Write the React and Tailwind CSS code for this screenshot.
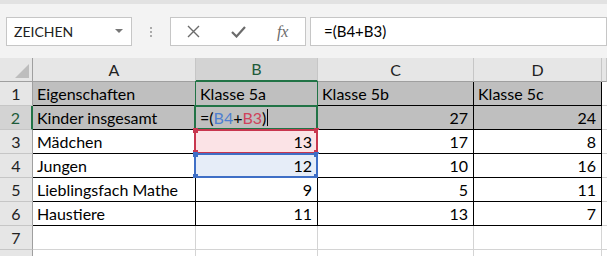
import React from 'react';

const cols = ['A', 'B', 'C', 'D', ''];

const rows = [
  { n: 1, gray: true, cells: ['Eigenschaften', 'Klasse 5a', 'Klasse 5b', 'Klasse 5c'] },
  { n: 2, gray: true, cells: ['Kinder insgesamt', 'formula', '27', '24'] },
  { n: 3, cells: ['Mädchen', '13', '17', '8'], ref: 'red' },
  { n: 4, cells: ['Jungen', '12', '10', '16'], ref: 'blue' },
  { n: 5, cells: ['Lieblingsfach Mathe', '9', '5', '11'] },
  { n: 6, cells: ['Haustiere', '11', '13', '7'] },
  { n: 7, cells: null },
  { n: '', cells: null },
];

const Formula = () => (
  <span className="flex items-center">
    <span>=(</span>
    <span className="text-[#4f7fd0]">B4</span>
    <span>+</span>
    <span className="text-[#d0435b]">B3</span>
    <span>)</span>
    <span className="ml-[1px] w-px h-[17px] bg-black" />
  </span>
);

const Handles = ({ color }) => (
  <>
    <span className={`absolute -left-[3px] -top-[3px] w-[5px] h-[5px] ${color}`} />
    <span className={`absolute -right-[3px] -top-[3px] w-[5px] h-[5px] ${color}`} />
    <span className={`absolute -left-[3px] -bottom-[3px] w-[5px] h-[5px] ${color}`} />
    <span className={`absolute -right-[3px] -bottom-[3px] w-[5px] h-[5px] ${color}`} />
  </>
);

function DataCell({ value, col, row }) {
  const isNum = /^\d+$/.test(value);
  const bg = row.gray ? 'bg-[#bfbfbf]' : row.ref === 'red' && col === 1 ? 'bg-[#fbe3e6]' : row.ref === 'blue' && col === 1 ? 'bg-[#e6edf8]' : 'bg-white';
  return (
    <div className={`relative h-[24px] border-r border-b border-black flex items-center ${bg} ${isNum ? 'justify-end pr-[5px]' : 'pl-[4px]'}`}>
      {value === 'formula' ? <Formula /> : <span className="whitespace-nowrap">{value}</span>}
      {row.n === 1 && col === 1 && (
        <span className="absolute -left-px -top-px right-[-1px] bottom-0 border-x border-[#217346]" />
      )}
      {row.n === 2 && col === 1 && (
        <span className="absolute -left-[2px] -top-[1px] right-[-1px] bottom-[-1px] border-2 border-[#217346]" />
      )}
      {row.ref === 'red' && col === 1 && (
        <span className="absolute -left-[2px] -top-[1px] right-[-1px] bottom-[-1px] border-2 border-[#c8374f]">
          <Handles color="bg-[#c8374f]" />
        </span>
      )}
      {row.ref === 'blue' && col === 1 && (
        <span className="absolute -left-[2px] -top-[1px] right-[-1px] bottom-[-1px] border-2 border-[#3f6fc6]">
          <Handles color="bg-[#3f6fc6]" />
        </span>
      )}
    </div>
  );
}

export default function App() {
  return (
    <div className="w-[607px] h-[256px] overflow-hidden bg-[#f3f3f3] text-[16px] text-black font-['Lato','Liberation_Sans',sans-serif]">
      <div className="h-[4px] bg-[#e2e2e2]" />

      {/* formula bar */}
      <div className="flex items-center h-[29px] mt-[13px] pl-[6px]">
        <div className="w-[126px] h-full bg-white border border-[#c6c6c6] flex items-center justify-between pl-[7px] pr-[8px]">
          <span className="text-[14px] text-[#222]">ZEICHEN</span>
          <svg width="8" height="5" viewBox="0 0 8 5"><path d="M0 0h8L4 4z" fill="#777" /></svg>
        </div>
        <div className="w-[38px] flex flex-col items-center gap-[2px]">
          <span className="w-[2px] h-[2px] bg-[#aaa]" />
          <span className="w-[2px] h-[2px] bg-[#aaa]" />
          <span className="w-[2px] h-[2px] bg-[#aaa]" />
        </div>
        <div className="w-[136px] h-full bg-white border border-[#c6c6c6] flex items-center">
          <div className="w-[45px] flex justify-center">
            <svg width="13" height="13" viewBox="0 0 13 13"><path d="M1 1l11 11M12 1L1 12" stroke="#6b6b6b" strokeWidth="1.4" /></svg>
          </div>
          <div className="w-[45px] flex justify-center">
            <svg width="15" height="12" viewBox="0 0 15 12"><path d="M1 6l4.5 4.5L14 1" stroke="#6b6b6b" strokeWidth="2.2" fill="none" /></svg>
          </div>
          <div className="w-[45px] flex justify-center">
            <span className="italic text-[16px] text-[#6b6b6b] font-['Liberation_Serif',serif]">fx</span>
          </div>
        </div>
        <div className="flex-1 h-full ml-[4px] bg-white border border-[#c6c6c6] flex items-center pl-[13px] text-[15px]">
          =(B4+B3)
        </div>
      </div>

      {/* sheet */}
      <div className="mt-[12px] grid grid-cols-[33px_163px_122px_156px_128px_1fr] bg-white">
        <div className="h-[24px] bg-[#e6e6e6] border-r border-b border-[#9f9f9f] flex items-end justify-end p-[3px]">
          <svg width="14" height="14" viewBox="0 0 14 14"><path d="M14 0V14H0z" fill="#bdbdbd" /></svg>
        </div>
        {cols.map((c, i) => (
          <div
            key={i}
            className={`h-[24px] flex items-center justify-center border-r border-[#c6c6c6] ${
              i === 1 ? 'bg-[#d3d3d3] border-b-2 border-b-[#217346] text-[#1e5b3a]' : 'bg-[#e6e6e6] border-b border-b-[#9f9f9f] text-[#222]'
            }`}
          >
            {c}
          </div>
        ))}

        {rows.map((row, ri) => (
          <React.Fragment key={ri}>
            <div
              className={`h-[24px] flex items-center justify-center border-b border-[#c6c6c6] ${
                row.n === 2 ? 'bg-[#d3d3d3] border-r-2 border-r-[#217346] text-[#1e5b3a]' : 'bg-[#e6e6e6] border-r border-r-[#9f9f9f] text-[#222]'
              }`}
            >
              {row.n}
            </div>
            {row.cells
              ? row.cells.map((v, ci) => <DataCell key={ci} value={v} col={ci} row={row} />)
              : [0, 1, 2, 3].map((ci) => <div key={ci} className="h-[24px] border-r border-b border-[#d4d4d4]" />)}
            <div className="h-[24px] border-b border-[#d4d4d4]" />
          </React.Fragment>
        ))}
      </div>
    </div>
  );
}
